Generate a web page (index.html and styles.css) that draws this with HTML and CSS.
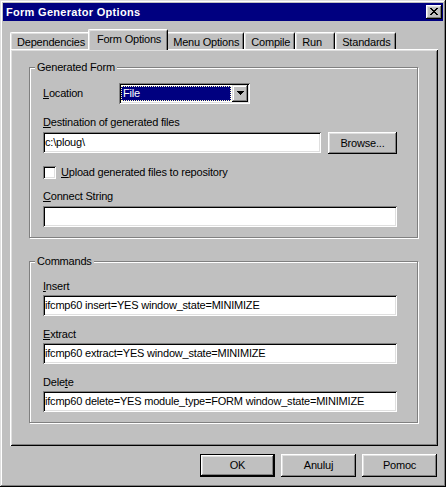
FILE: index.html
```html
<!DOCTYPE html>
<html>
<head>
<meta charset="utf-8">
<title>Form Generator Options</title>
<link rel="stylesheet" href="styles.css">
</head>
<body>
<div class="window">
  <div class="titlebar">
    <span class="title">Form Generator Options</span>
    <span class="close-btn">
      <svg width="8" height="7" viewBox="0 0 8 7" shape-rendering="crispEdges">
        <path d="M0 0h2v1H0zM6 0h2v1H6zM1 1h2v1H1zM5 1h2v1H5zM2 2h4v1H2zM3 3h2v1H3zM2 4h4v1H2zM1 5h2v1H1zM5 5h2v1H5zM0 6h2v1H0zM6 6h2v1H6z" fill="#000"/>
      </svg>
    </span>
  </div>
  <div class="content">
    <div class="tabs">
      <div class="tab">Dependencies</div>
      <div class="tab active">Form Options</div>
      <div class="tab">Menu Options</div>
      <div class="tab">Compile</div>
      <div class="tab run">Run</div>
      <div class="tab">Standards</div>
    </div>
    <div class="panel">
      <fieldset class="group gen">
        <legend>Generated Form</legend>
        <div class="loc-row">
          <span class="loc-label"><u>L</u>ocation</span>
          <div class="combo">
            <div class="combo-field"><span class="combo-sel">File</span></div>
            <div class="combo-btn">
              <svg width="7" height="4" viewBox="0 0 7 4" shape-rendering="crispEdges">
                <path d="M0 0h7v1H0zM1 1h5v1H1zM2 2h3v1H2zM3 3h1v1H3z" fill="#000"/>
              </svg>
            </div>
          </div>
        </div>
        <div class="field-label dest"><u>D</u>estination of generated files</div>
        <div class="dest-row">
          <div class="input grow">c:\ploug\</div>
          <div class="button browse">Browse...</div>
        </div>
        <div class="check-row">
          <span class="checkbox"></span>
          <span><u>U</u>pload generated files to repository</span>
        </div>
        <div class="field-label connect"><u>C</u>onnect String</div>
        <div class="input"></div>
      </fieldset>
      <fieldset class="group cmd">
        <legend>Commands</legend>
        <div class="field-label"><u>I</u>nsert</div>
        <div class="input">ifcmp60 insert=YES window_state=MINIMIZE</div>
        <div class="field-label next"><u>E</u>xtract</div>
        <div class="input">ifcmp60 extract=YES window_state=MINIMIZE</div>
        <div class="field-label next">Dele<u>t</u>e</div>
        <div class="input">ifcmp60 delete=YES module_type=FORM window_state=MINIMIZE</div>
      </fieldset>
    </div>
    <div class="buttons">
      <div class="button dlg default">OK</div>
      <div class="button dlg">Anuluj</div>
      <div class="button dlg">Pomoc</div>
    </div>
  </div>
</div>
</body>
</html>
```
FILE: styles.css
```css
html, body {
  margin: 0;
  padding: 0;
  background: #c0c0c0;
}

body {
  font-family: "Liberation Sans", Arial, sans-serif;
  font-size: 11px;
  line-height: 13px;
  letter-spacing: -0.2px;
  color: #000;
}

u {
  text-decoration: underline;
  text-underline-offset: 1px;
}

.window {
  width: 446px;
  height: 487px;
  box-sizing: border-box;
  padding: 3px;
  background: #c0c0c0;
  box-shadow: inset -1px -1px #000, inset 1px 1px #dfdfdf, inset -2px -2px #808080, inset 2px 2px #fff;
  display: flex;
  flex-direction: column;
}

.titlebar {
  height: 18px;
  background: #000080;
  color: #fff;
  display: flex;
  align-items: center;
  justify-content: space-between;
  padding: 0 1px 0 3px;
}

.title {
  font-weight: bold;
  font-size: 11px;
  letter-spacing: 0.3px;
}

.close-btn {
  width: 16px;
  height: 14px;
  box-sizing: border-box;
  background: #c0c0c0;
  box-shadow: inset -1px -1px #000, inset 1px 1px #fff, inset -2px -2px #808080, inset 2px 2px #dfdfdf;
  display: flex;
  align-items: center;
  justify-content: center;
  padding: 0 1px 1px 0;
}

.close-btn svg {
  display: block;
}

.content {
  flex: 1;
  display: flex;
  flex-direction: column;
  padding: 8px 5px 7px 7px;
}

.tabs {
  display: flex;
  align-items: flex-end;
  height: 20px;
}

.tab {
  height: 17px;
  box-sizing: border-box;
  padding: 3px 4px 0 6px;
  border-top: 1px solid #fff;
  border-left: 1px solid #fff;
  border-right: 1px solid #000;
  border-radius: 2px 2px 0 0;
  box-shadow: inset 1px 1px #dfdfdf, inset -1px 0 #808080;
  white-space: nowrap;
}

.tab.run {
  min-width: 40px;
}

.tab.active {
  position: relative;
  z-index: 1;
  height: 21px;
  margin: 0 -2px -1px;
  padding: 3px 6px 0 8px;
  background: #c0c0c0;
}

.panel {
  flex: 1;
  box-sizing: border-box;
  padding: 12px 20px 0 19px;
  background: #c0c0c0;
  box-shadow: inset 1px 1px #fff, inset -1px -1px #000, inset 2px 2px #dfdfdf, inset -2px -2px #808080;
  display: flex;
  flex-direction: column;
}

.group {
  margin: 0;
  min-width: 0;
  border: 1px solid #808080;
  box-shadow: inset 1px 1px #fff, 1px 1px #fff;
  display: flex;
  flex-direction: column;
}

.group legend {
  margin-left: -8px;
  padding: 0 2px;
  line-height: 13px;
  background: #c0c0c0;
}

.gen {
  padding: 9px 20px 10px 13px;
}

.cmd {
  margin-top: 17px;
  padding: 12px 20px 10px 13px;
}

.loc-row {
  display: flex;
  align-items: center;
  height: 21px;
}

.loc-label {
  width: 76px;
}

.combo {
  width: 131px;
  height: 21px;
  box-sizing: border-box;
  padding: 2px;
  background: #fff;
  box-shadow: inset 1px 1px #808080, inset -1px -1px #fff, inset 2px 2px #000, inset -2px -2px #dfdfdf;
  display: flex;
}

.combo-field {
  flex: 1;
  padding: 1px 1px 1px 0;
  display: flex;
}

.combo-sel {
  flex: 1;
  background: #000080;
  color: #fff;
  outline: 1px dotted #ffffc0;
  outline-offset: -1px;
  padding-left: 2px;
  line-height: 15px;
}

.combo-btn {
  width: 16px;
  height: 17px;
  box-sizing: border-box;
  background: #c0c0c0;
  box-shadow: inset -1px -1px #000, inset 1px 1px #dfdfdf, inset -2px -2px #808080, inset 2px 2px #fff;
  display: flex;
  align-items: center;
  justify-content: center;
  padding-bottom: 1px;
}

.field-label {
  height: 13px;
  margin-bottom: 2px;
  white-space: nowrap;
}

.field-label.dest {
  margin-top: 12px;
  margin-bottom: 3px;
}

.field-label.connect {
  margin-top: 11px;
  margin-bottom: 3px;
}

.field-label.next {
  margin-top: 12px;
}

.input {
  height: 21px;
  box-sizing: border-box;
  padding: 2px;
  background: #fff;
  box-shadow: inset 1px 1px #808080, inset -1px -1px #fff, inset 2px 2px #000, inset -2px -2px #dfdfdf;
  line-height: 17px;
  white-space: nowrap;
  overflow: hidden;
}

.dest-row {
  display: flex;
  align-items: flex-start;
  gap: 7px;
}

.grow {
  flex: 1;
}

.button {
  box-sizing: border-box;
  background: #c0c0c0;
  box-shadow: inset -1px -1px #000, inset 1px 1px #fff, inset -2px -2px #808080, inset 2px 2px #dfdfdf;
  display: flex;
  align-items: center;
  justify-content: center;
  white-space: nowrap;
}

.browse {
  width: 69px;
  height: 22px;
}

.check-row {
  display: flex;
  align-items: center;
  gap: 5px;
  margin-top: 12px;
  height: 13px;
}

.checkbox {
  width: 13px;
  height: 13px;
  box-sizing: border-box;
  background: #fff;
  box-shadow: inset 1px 1px #808080, inset -1px -1px #fff, inset 2px 2px #000, inset -2px -2px #dfdfdf;
}

.buttons {
  display: flex;
  justify-content: flex-end;
  gap: 6px;
  margin-top: 8px;
  padding-right: 1px;
}

.dlg {
  width: 75px;
  height: 23px;
  padding-bottom: 1px;
}

.dlg.default {
  box-shadow: inset 0 0 0 1px #000, inset -2px -2px #000, inset 2px 2px #fff, inset -3px -3px #808080, inset 3px 3px #dfdfdf;
}
```
